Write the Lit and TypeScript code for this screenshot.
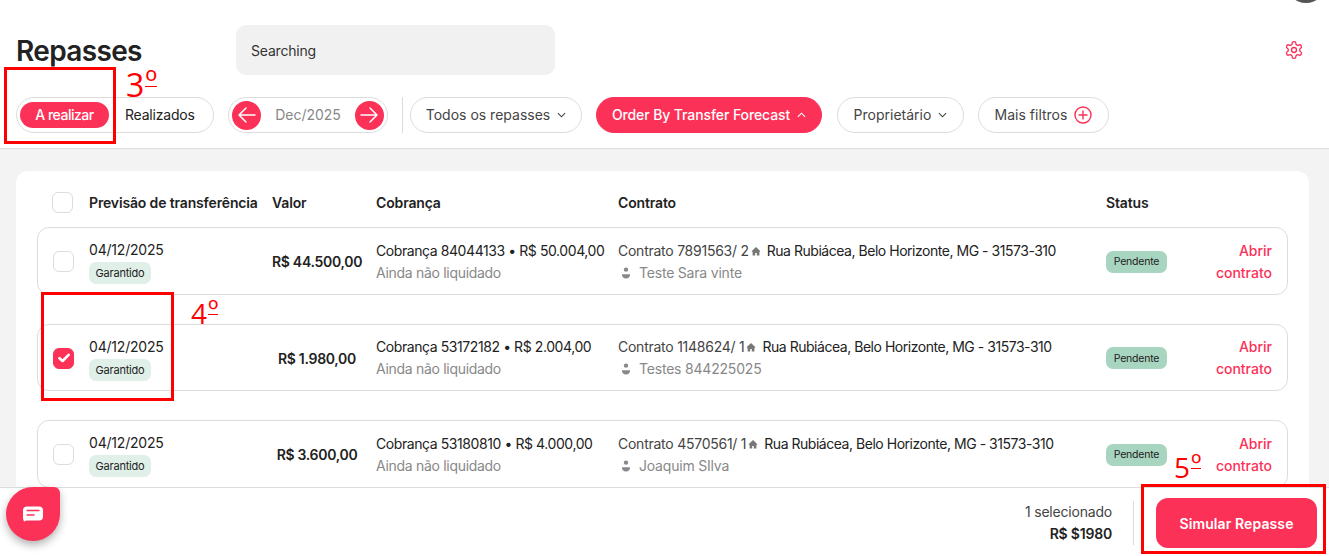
import { LitElement, css, html, svg } from 'lit';
import { customElement } from 'lit/decorators.js';

const chevron = (up = false) => html`<svg class="chev" viewBox="0 0 10 6" width="9" height="6" fill="none" stroke="currentColor" stroke-width="1.2">
  <path d=${up ? 'M1 5.2 5 1l4 4.2' : 'M1 .8 5 5l4-4.2'} />
</svg>`;

const arrow = (right: boolean) => svg`<svg viewBox="0 0 20 20" width="20" height="20" fill="none" stroke="#fff" stroke-width="1.5" stroke-linecap="round" stroke-linejoin="round">
  <path d=${right ? 'M2 10h16M11 3l7 7-7 7' : 'M18 10H2M9 3l-7 7 7 7'} />
</svg>`;

const rows = [
  { charge: 'Cobrança 84044133', chargeValue: 'R$ 50.004,00', value: 'R$ 44.500,00', contract: 'Contrato 7891563/ 2', owner: 'Teste Sara vinte', checked: false },
  { charge: 'Cobrança 53172182', chargeValue: 'R$ 2.004,00', value: 'R$ 1.980,00', contract: 'Contrato 1148624/ 1', owner: 'Testes 844225025', checked: true },
  { charge: 'Cobrança 53180810', chargeValue: 'R$ 4.000,00', value: 'R$ 3.600,00', contract: 'Contrato 4570561/ 1', owner: 'Joaquim SIlva', checked: false },
];

@customElement('app-root')
export class AppRoot extends LitElement {
  static styles = css`
    :host {
      display: flex;
      flex-direction: column;
      position: relative;
      height: 100vh;
      overflow: hidden;
      background: #f3f3f3;
      color: #222;
      font-family: Inter, 'Liberation Sans', sans-serif;
      font-size: 14px;
      letter-spacing: -0.2px;
    }
    .top {
      background: #fff;
      border-bottom: 1px solid #dedede;
      padding: 25px 25px 15px 16px;
      display: flex;
      flex-direction: column;
      gap: 22px;
    }
    .title-row {
      display: flex;
      align-items: center;
      height: 50px;
    }
    h1 {
      width: 220px;
      margin: 0;
      padding-top: 1px;
      font-size: 28px;
      font-weight: 600;
      letter-spacing: -0.65px;
    }
    .search {
      width: 319px;
      height: 50px;
      box-sizing: border-box;
      padding: 1px 0 0 15px;
      display: flex;
      align-items: center;
      background: #f1f1f1;
      border-radius: 10px;
      color: #333;
    }
    .gear {
      margin-left: auto;
      color: #fc3158;
    }
    .avatar {
      position: absolute;
      top: -37px;
      left: 1286px;
      width: 40px;
      height: 40px;
      border-radius: 50%;
      background: #555;
    }
    .toolbar {
      display: flex;
      align-items: center;
      gap: 14px;
      height: 36px;
    }
    .pill {
      height: 36px;
      box-sizing: border-box;
      border: 1px solid #dcdcdc;
      border-radius: 18px;
      display: flex;
      align-items: center;
      justify-content: center;
      gap: 7px;
      color: #444;
      white-space: nowrap;
      letter-spacing: 0;
    }
    .lbl { margin-bottom: 2px; }
    .pill.active {
      background: #fc3158;
      border-color: #fc3158;
      color: #fff;
      font-weight: 500;
      letter-spacing: -0.1px;
    }
    .segment {
      width: 198px;
      justify-content: flex-start;
      padding-left: 3px;
      gap: 16px;
      color: #222;
      letter-spacing: -0.2px;
    }
    .segment .on {
      width: 89px;
      height: 26px;
      box-sizing: border-box;
      padding-bottom: 1px;
      border-radius: 13px;
      background: #fc3158;
      color: #fff;
      font-weight: 500;
      display: flex;
      align-items: center;
      justify-content: center;
      letter-spacing: -0.5px;
    }
    .date {
      width: 160px;
      justify-content: space-between;
      padding: 0 3px;
      color: #888;
    }
    .round {
      width: 29px;
      height: 29px;
      border-radius: 50%;
      background: #fc3158;
      display: flex;
      align-items: center;
      justify-content: center;
    }
    .sep {
      width: 1px;
      height: 36px;
      background: #dcdcdc;
      margin-right: -7px;
    }
    .w-all { width: 172px; }
    .w-order { width: 226px; }
    .w-owner { width: 127px; margin-left: 1px; }
    .w-more { width: 131px; }
    .plus { color: #fc3158; }

    main {
      flex: 1;
      min-height: 0;
      padding: 22px 20px 0 16px;
      overflow: hidden;
    }
    .card {
      background: #fff;
      border-radius: 12px 12px 0 0;
      padding: 21px 21px 0;
      display: flex;
      flex-direction: column;
      gap: 29px;
    }
    .grid {
      display: grid;
      grid-template-columns: 36px 183px 104px 242px 488px 95px 1fr;
      align-items: center;
      padding: 0 15px;
    }
    .head {
      height: 21px;
      margin: 0 0 -15px;
      padding-left: 16px;
      font-weight: 600;
      letter-spacing: -0.15px;
    }
    .head .box { margin-left: -1px; }
    .row {
      height: 67.5px;
      box-sizing: border-box;
      padding-top: 2px;
      border: 1px solid #dcdcdc;
      border-radius: 12px;
    }
    .box {
      width: 21px;
      height: 21px;
      box-sizing: border-box;
      border: 1px solid #dcdcdc;
      border-radius: 6px;
      background: #fff;
      display: flex;
      align-items: center;
      justify-content: center;
    }
    .box.on {
      background: #fc3158;
      border-color: #fc3158;
    }
    .stack {
      display: flex;
      flex-direction: column;
      align-items: flex-start;
      line-height: 22px;
    }
    .tag {
      height: 22px;
      width: 62px;
      margin-top: 1px;
      border-radius: 7px;
      background: #e0f0e9;
      font-size: 11px;
      display: flex;
      align-items: center;
      justify-content: center;
    }
    .value {
      width: 90px;
      text-align: center;
      font-weight: 600;
      white-space: nowrap;
      letter-spacing: -0.3px;
    }
    .muted { color: #888; }
    .tight { letter-spacing: -0.42px; }
    .soft { letter-spacing: -0.3px; }
    .line {
      display: flex;
      align-items: center;
      white-space: nowrap;
    }
    .contract {
      color: #444;
      letter-spacing: -0.25px;
    }
    .address { letter-spacing: -0.47px; }
    .house {
      margin: 0 6px 0 2px;
      color: #777;
    }
    .person {
      margin: 0 8px 0 3px;
      color: #888;
    }
    .status {
      width: 61px;
      height: 22px;
      border-radius: 7px;
      background: #a8d5c0;
      font-size: 10.5px;
      display: flex;
      align-items: center;
      justify-content: center;
    }
    .action {
      width: 70px;
      justify-self: end;
      text-align: right;
      line-height: 22px;
      color: #fc3158;
      font-weight: 500;
      letter-spacing: 0;
    }

    footer {
      height: 69px;
      box-sizing: border-box;
      background: #fff;
      border-top: 1px solid #dcdcdc;
      display: flex;
      align-items: center;
      justify-content: flex-end;
      padding: 2px 12px 0 0;
      position: relative;
    }
    .total {
      text-align: right;
      line-height: 22px;
      padding-right: 21px;
      color: #444;
    }
    .total b {
      display: block;
      font-weight: 600;
      color: #222;
    }
    .vsep {
      width: 1px;
      height: 44px;
      background: #dcdcdc;
      margin-right: 22px;
    }
    .simulate {
      width: 161px;
      height: 50px;
      border: 0;
      border-radius: 12px;
      background: #fc3158;
      color: #fff;
      font: 600 14px Inter, 'Liberation Sans', sans-serif;
      letter-spacing: 0.1px;
    }
    .chat {
      position: absolute;
      left: 6px;
      top: 487px;
      width: 54px;
      height: 54px;
      border-radius: 50% 6px 50% 50%;
      background: #fc3158;
      box-shadow: 0 4px 8px rgba(0, 0, 0, 0.3);
      display: flex;
      align-items: center;
      justify-content: center;
    }

    .mark {
      position: absolute;
      box-sizing: border-box;
      border: 3px solid #f00;
      pointer-events: none;
    }
    .mark-3 { left: 4px; top: 67px; width: 112px; height: 77px; }
    .mark-4 { left: 41px; top: 292px; width: 133px; height: 109px; }
    .mark-5 { left: 1141px; top: 484px; width: 185px; height: 70px; }
    .note {
      position: absolute;
      color: #f00;
      font: 400 28px/30px 'Open Sans', sans-serif;
      letter-spacing: 0;
      white-space: nowrap;
      pointer-events: none;
    }
    .note span {
      display: inline-block;
      height: 16px;
      line-height: 22px;
      margin-left: 1px;
      vertical-align: top;
      border-bottom: 1.5px solid #f00;
    }
    .note-3 { left: 126px; top: 70px; font-size: 32px; }
    .note-4 { left: 191px; top: 298px; }
    .note-5 { left: 1174px; top: 452px; }
  `;

  private renderRow(r: (typeof rows)[number]) {
    return html`
      <div class="grid row">
        <div class="box ${r.checked ? 'on' : ''}">
          ${r.checked
            ? html`<svg viewBox="0 0 12 10" width="12" height="10" fill="none" stroke="#fff" stroke-width="2.6" stroke-linecap="round" stroke-linejoin="round"><path d="M1.5 5.2 4.6 8l6-6.2" /></svg>`
            : ''}
        </div>
        <div class="stack">
          <span>04/12/2025</span>
          <span class="tag">Garantido</span>
        </div>
        <div class="value">${r.value}</div>
        <div class="stack">
          <span class="tight">${r.charge} • ${r.chargeValue}</span>
          <span class="muted soft">Ainda não liquidado</span>
        </div>
        <div class="stack">
          <span class="line">
            <span class="contract">${r.contract}</span>
            <svg class="house" viewBox="0 0 10 10" width="10" height="10" fill="currentColor"><path d="M5 1 .6 5.2 1.6 6V9.5h2.6V7h1.6v2.5h2.6V6l1-.8z" /></svg>
            <span class="address">Rua Rubiácea, Belo Horizonte, MG - 31573-310</span>
          </span>
          <span class="line muted">
            <svg class="person" viewBox="0 0 10 12" width="10" height="12" fill="currentColor"><circle cx="5" cy="2.6" r="2.2" /><path d="M1 7.2h8c.3 2.6-1.4 4.3-4 4.3S.7 9.8 1 7.2z" /></svg>
            ${r.owner}
          </span>
        </div>
        <span class="status">Pendente</span>
        <div class="action">Abrir contrato</div>
      </div>
    `;
  }

  render() {
    return html`
      <div class="top">
        <div class="title-row">
          <h1>Repasses</h1>
          <div class="search">Searching</div>
          <svg class="gear" viewBox="0 0 24 24" width="20" height="20" fill="none" stroke="currentColor" stroke-width="1.6" stroke-linecap="round" stroke-linejoin="round">
            <path d="M12.22 2h-.44a2 2 0 0 0-2 2v.18a2 2 0 0 1-1 1.73l-.43.25a2 2 0 0 1-2 0l-.15-.08a2 2 0 0 0-2.73.73l-.22.38a2 2 0 0 0 .73 2.73l.15.1a2 2 0 0 1 1 1.72v.51a2 2 0 0 1-1 1.74l-.15.09a2 2 0 0 0-.73 2.73l.22.38a2 2 0 0 0 2.73.73l.15-.08a2 2 0 0 1 2 0l.43.25a2 2 0 0 1 1 1.73V20a2 2 0 0 0 2 2h.44a2 2 0 0 0 2-2v-.18a2 2 0 0 1 1-1.73l.43-.25a2 2 0 0 1 2 0l.15.08a2 2 0 0 0 2.73-.73l.22-.39a2 2 0 0 0-.73-2.73l-.15-.08a2 2 0 0 1-1-1.74v-.5a2 2 0 0 1 1-1.74l.15-.09a2 2 0 0 0 .73-2.73l-.22-.38a2 2 0 0 0-2.73-.73l-.15.08a2 2 0 0 1-2 0l-.43-.25a2 2 0 0 1-1-1.73V4a2 2 0 0 0-2-2z" />
            <circle cx="12" cy="12" r="3" />
          </svg>
        </div>
        <div class="toolbar">
          <div class="pill segment"><span class="on">A realizar</span><span class="lbl">Realizados</span></div>
          <div class="pill date">
            <span class="round">${arrow(false)}</span>
            <span class="lbl">Dec/2025</span>
            <span class="round">${arrow(true)}</span>
          </div>
          <span class="sep"></span>
          <div class="pill w-all"><span class="lbl">Todos os repasses</span> ${chevron()}</div>
          <div class="pill active w-order"><span class="lbl">Order By Transfer Forecast</span> ${chevron(true)}</div>
          <div class="pill w-owner"><span class="lbl">Proprietário</span> ${chevron()}</div>
          <div class="pill w-more">
            <span class="lbl">Mais filtros</span>
            <svg class="plus" viewBox="0 0 18 18" width="18" height="18" fill="none" stroke="currentColor" stroke-width="1.4" stroke-linecap="round"><circle cx="9" cy="9" r="8" /><path d="M9 5v8M5 9h8" /></svg>
          </div>
        </div>
      </div>

      <main>
        <div class="card">
          <div class="grid head">
            <div class="box"></div>
            <span>Previsão de transferência</span>
            <span>Valor</span>
            <span>Cobrança</span>
            <span>Contrato</span>
            <span>Status</span>
          </div>
          ${rows.map((r) => this.renderRow(r))}
        </div>
      </main>

      <footer>
        <div class="total">1 selecionado<b>R$ $1980</b></div>
        <span class="vsep"></span>
        <button class="simulate">Simular Repasse</button>
      </footer>

      <span class="avatar"></span>
      <div class="chat">
        <svg viewBox="0 0 20 16" width="20" height="16">
          <path fill="#fff" d="M4 .5h12a4 4 0 0 1 4 4v6a4 4 0 0 1-4 4H3.5L1 15.5l-1-3v-8a4 4 0 0 1 4-4z" />
          <path d="M3.5 4.5h13M3.5 9h8" stroke="#fc3158" stroke-width="1.3" fill="none" />
        </svg>
      </div>

      <span class="mark mark-3"></span>
      <span class="mark mark-4"></span>
      <span class="mark mark-5"></span>
      <span class="note note-3">3<span>º</span></span>
      <span class="note note-4">4<span>º</span></span>
      <span class="note note-5">5<span>º</span></span>
    `;
  }
}
